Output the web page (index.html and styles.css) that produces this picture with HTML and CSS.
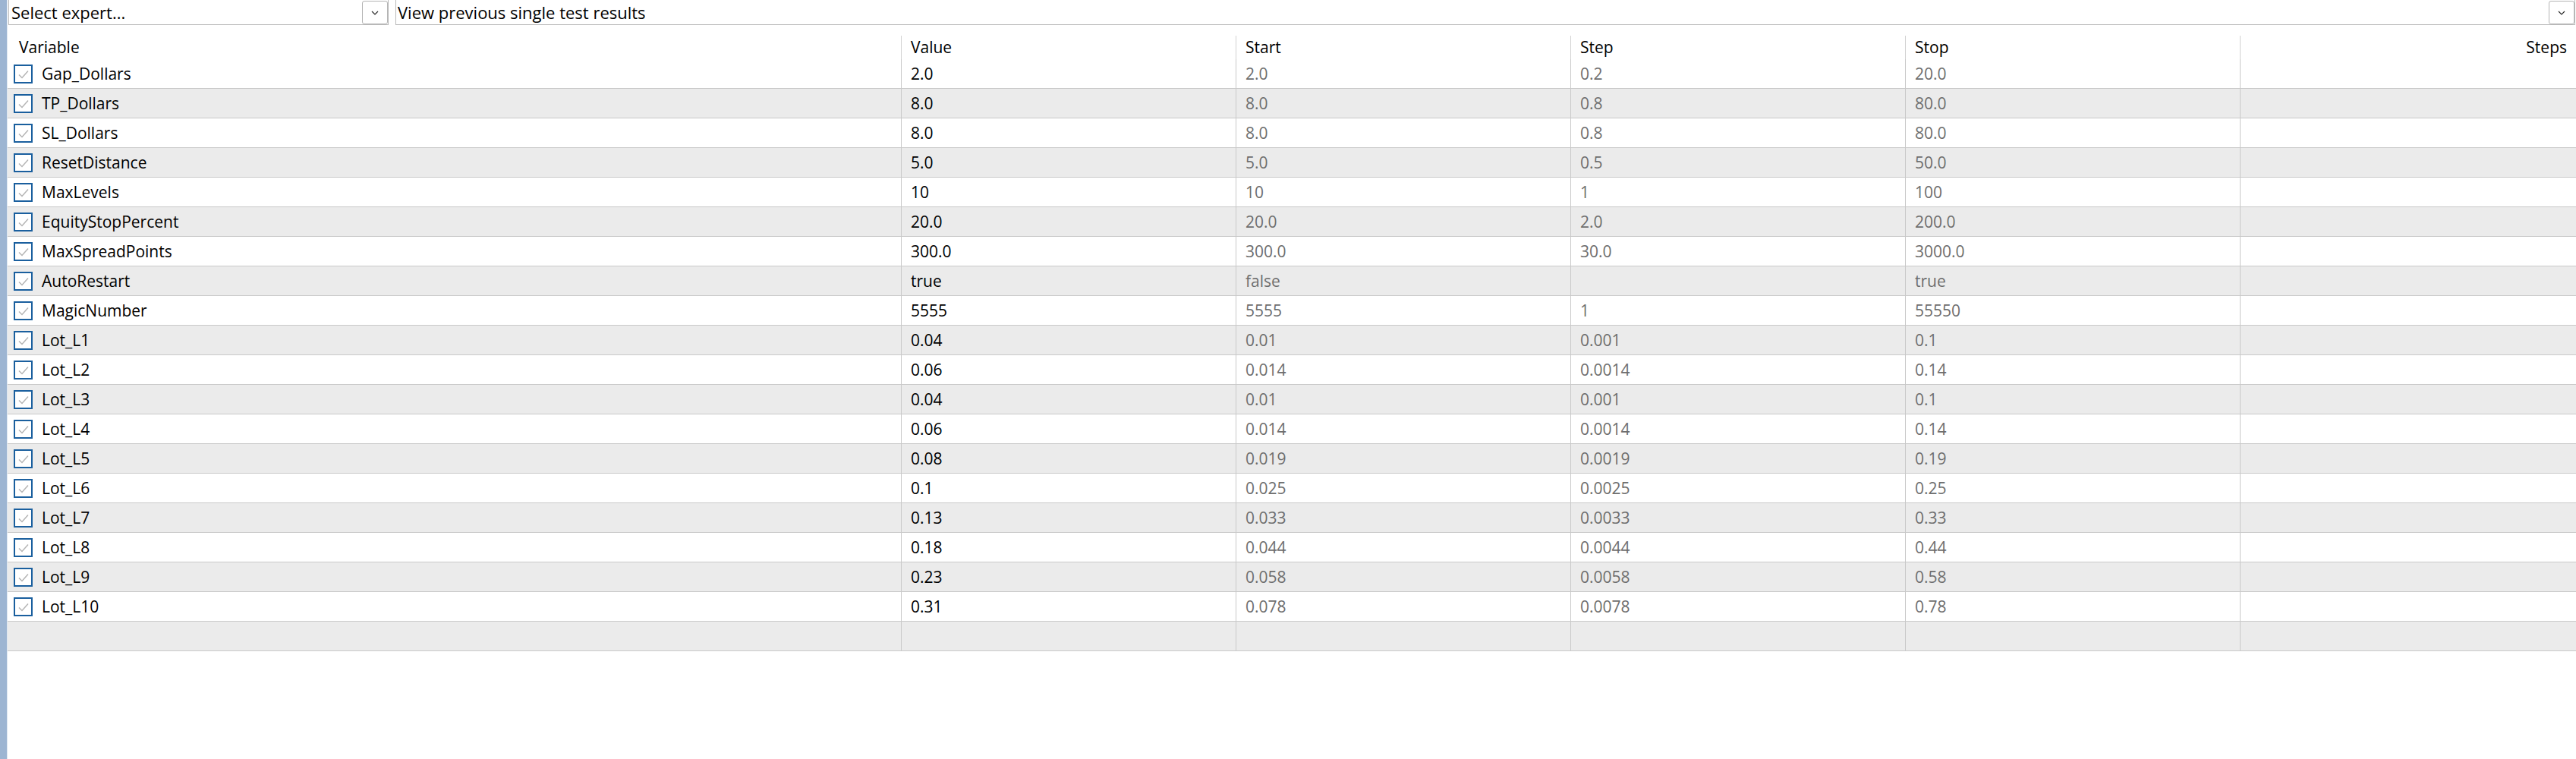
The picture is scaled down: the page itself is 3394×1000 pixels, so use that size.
FILE: index.html
```html
<!DOCTYPE html>
<html>
<head>
<meta charset="utf-8">
<link rel="stylesheet" href="styles.css">
</head>
<body>
<div class="app">
  <div class="strip"></div>
  <div class="main">
    <div class="toolbar">
      <div class="select sel-expert"><span class="sel-text">Select expert...</span><span class="sel-btn"><svg width="10" height="6" viewBox="0 0 10 6"><path d="M1 1 L5 5 L9 1" fill="none" stroke="#2a2a2a" stroke-width="1.2"/></svg></span></div>
      <div class="select sel-view"><span class="sel-text">View previous single test results</span><span class="sel-btn"><svg width="10" height="6" viewBox="0 0 10 6"><path d="M1 1 L5 5 L9 1" fill="none" stroke="#2a2a2a" stroke-width="1.2"/></svg></span></div>
    </div>
    <div class="grid">
      <div class="hrow">
        <div class="hcell first"><div class="hin">Variable</div></div>
        <div class="hcell"><div class="hin sep">Value</div></div>
        <div class="hcell"><div class="hin sep">Start</div></div>
        <div class="hcell"><div class="hin sep">Step</div></div>
        <div class="hcell"><div class="hin sep">Stop</div></div>
        <div class="hcell"><div class="hin sep right">Steps</div></div>
      </div>
      <div id="rows"></div>
    </div>
  </div>
</div>
<script>
var data = [
["Gap_Dollars","2.0","2.0","0.2","20.0"],
["TP_Dollars","8.0","8.0","0.8","80.0"],
["SL_Dollars","8.0","8.0","0.8","80.0"],
["ResetDistance","5.0","5.0","0.5","50.0"],
["MaxLevels","10","10","1","100"],
["EquityStopPercent","20.0","20.0","2.0","200.0"],
["MaxSpreadPoints","300.0","300.0","30.0","3000.0"],
["AutoRestart","true","false","","true"],
["MagicNumber","5555","5555","1","55550"],
["Lot_L1","0.04","0.01","0.001","0.1"],
["Lot_L2","0.06","0.014","0.0014","0.14"],
["Lot_L3","0.04","0.01","0.001","0.1"],
["Lot_L4","0.06","0.014","0.0014","0.14"],
["Lot_L5","0.08","0.019","0.0019","0.19"],
["Lot_L6","0.1","0.025","0.0025","0.25"],
["Lot_L7","0.13","0.033","0.0033","0.33"],
["Lot_L8","0.18","0.044","0.0044","0.44"],
["Lot_L9","0.23","0.058","0.0058","0.58"],
["Lot_L10","0.31","0.078","0.0078","0.78"]
];
var check = '<span class="cb"><svg width="20" height="20" viewBox="0 0 20 20"><path d="M4 10.5 L8 14.5 L16 5.5" fill="none" stroke="#b4b4b4" stroke-width="1.5"/></svg></span>';
var html = "";
data.forEach(function(r, i){
  html += '<div class="row ' + (i % 2 ? 'alt' : '') + '">' +
    '<div class="cell first">' + check + '<span class="name">' + r[0] + '</span></div>' +
    '<div class="cell val">' + r[1] + '</div>' +
    '<div class="cell dim">' + r[2] + '</div>' +
    '<div class="cell dim">' + r[3] + '</div>' +
    '<div class="cell dim">' + r[4] + '</div>' +
    '<div class="cell dim"></div></div>';
});
html += '<div class="row alt"><div class="cell first"></div><div class="cell"></div><div class="cell"></div><div class="cell"></div><div class="cell"></div><div class="cell"></div></div>';
document.getElementById("rows").innerHTML = html;
</script>
</body>
</html>
```
FILE: styles.css
```css
html, body {
  margin: 0;
  padding: 0;
  background: #ffffff;
  overflow: hidden;
}
body {
  width: 3394px;
  height: 1000px;
  font-family: "Open Sans", "Noto Sans", sans-serif;
  font-size: 21px;
  color: #000;
}
.app {
  display: flex;
  height: 1000px;
}
.strip {
  width: 9px;
  flex: none;
  background: #9db5d2;
  border-right: 1px solid #dde6f0;
}
.main {
  flex: 1;
  min-width: 0;
}
.toolbar {
  display: flex;
  height: 34px;
  padding-left: 1px;
  gap: 9px;
  align-items: flex-start;
}
.select {
  display: flex;
  align-items: center;
  height: 34px;
  margin-top: -1px;
  border: 1px solid #b9b9b9;
  box-sizing: border-box;
  background: #fff;
  font-size: 22px;
}
.sel-expert {
  width: 501px;
  flex: none;
}
.sel-view {
  flex: 1;
  margin-right: 1px;
}
.sel-text {
  flex: 1;
  padding-left: 3px;
  line-height: 32px;
  white-space: nowrap;
}
.sel-view .sel-text {
  padding-left: 2px;
}
.sel-btn {
  width: 34px;
  height: 31px;
  box-sizing: border-box;
  border: 1px solid #b5b5b5;
  border-radius: 3px;
  margin-top: 1px;
  display: flex;
  align-items: center;
  justify-content: center;
  background: #fff;
}
.hrow, .row {
  display: grid;
  grid-template-columns: 1177px 441px 441px 441px 441px 1fr;
}
.hrow {
  height: 44px;
}
.hcell {
  padding-top: 13px;
  box-sizing: border-box;
}
.hin {
  height: 31px;
  line-height: 31px;
  padding-left: 12px;
  white-space: nowrap;
}
.hcell.first .hin {
  padding-left: 15px;
}
.hin.sep {
  border-left: 1px solid #d2d2d2;
}
.hin.right {
  text-align: right;
  padding-right: 12px;
}
.row {
  height: 39px;
  box-sizing: border-box;
  border-bottom: 1px solid #c9c9c9;
  background: #fff;
}
.row.alt {
  background: #ebebeb;
}
.cell {
  border-left: 1px solid #c9c9c9;
  padding-left: 12px;
  line-height: 38px;
  white-space: nowrap;
  overflow: hidden;
}
.cell.first {
  border-left: none;
  padding-left: 8px;
  display: flex;
  align-items: center;
}
.cell.dim {
  color: #6e6e6e;
}
.cb {
  width: 25px;
  height: 25px;
  box-sizing: border-box;
  border: 2px solid #1a5f9e;
  background: #fff;
  display: flex;
  align-items: center;
  justify-content: center;
  flex: none;
  margin-top: 1px;
}
.name {
  margin-left: 12px;
}
```
